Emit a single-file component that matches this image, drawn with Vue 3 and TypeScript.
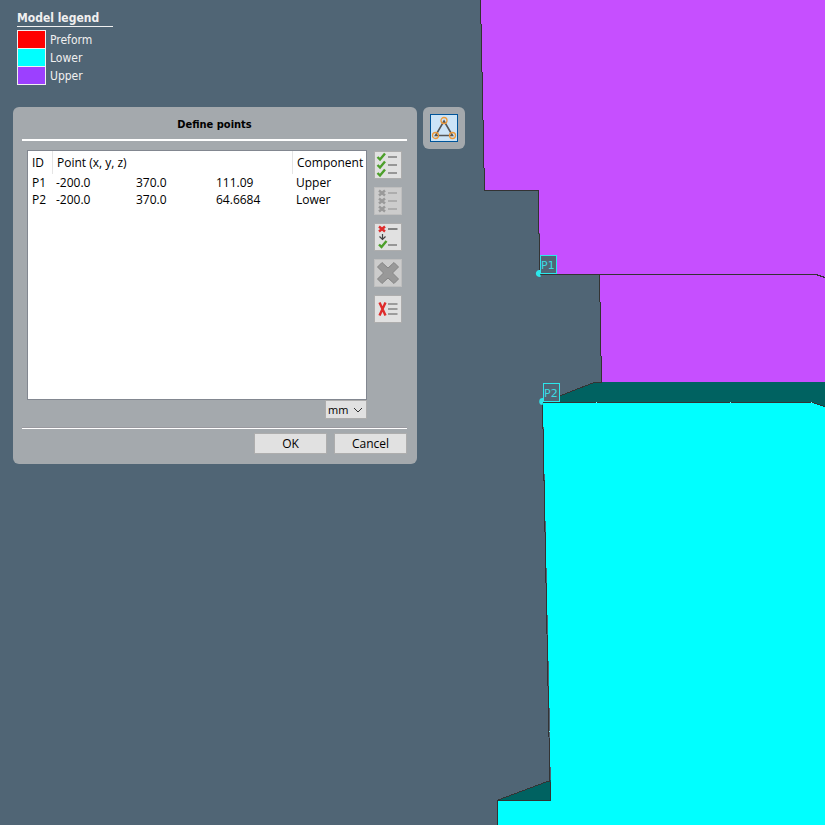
<script setup lang="ts">
import { ref } from 'vue'

interface LegendItem {
  name: string
  tone: string
}

interface PointRow {
  id: string
  x: string
  y: string
  z: string
  component: string
}

const legend: LegendItem[] = [
  { name: 'Preform', tone: 'preform' },
  { name: 'Lower', tone: 'lower' },
  { name: 'Upper', tone: 'upper' },
]

const points = ref<PointRow[]>([
  { id: 'P1', x: '-200.0', y: '370.0', z: '111.09', component: 'Upper' },
  { id: 'P2', x: '-200.0', y: '370.0', z: '64.6684', component: 'Lower' },
])

const unit = ref('mm')
const rowOffsets: number[] = [5, 13, 21]
</script>

<template>
  <main class="viewport">
    <svg class="scene" viewBox="0 0 825 825" preserveAspectRatio="xMinYMin slice" aria-hidden="true">
      <g shape-rendering="crispEdges">
        <path class="upper" d="M480 0L484 190H539L540 274H600L602 383H825V0Z" />
        <path class="shade" d="M543 402L596 382H825V406L812 403Z" />
        <path class="lower" d="M543 403H812L825 407V825H498V800H551L550 731Z" />
        <path class="shade" d="M498 800L551 780V800Z" />
        <path class="edge" d="M480.500 0L484.500 190.500H538.500L539.500 274.500H816L825 277.500" />
        <path class="edge" d="M599.500 274L601.500 382" />
        <path class="edge" d="M543 402.500L594 382.500H602" />
        <path class="edge" d="M825 406.500L812 402.500H542.500L549.500 762L550.500 800.500H497.500V825" />
        <path class="edge" d="M498 800L550 780.500" />
        <path class="glint" d="M596 402h1v1h-1zM730 402h1v1h-1zM811 402h1v1h-1zM549 731h1v1h-1z" />
      </g>
      <path class="marker" d="M540 270A3.500 3.500 0 1 0 541 276.500L540 274Z" />
      <path class="marker" d="M543 398A3.500 3.500 0 1 0 542.500 405L543 403Z" />
      <rect class="tag solid" x="540.500" y="255.500" width="16" height="18" />
      <text class="tag-text" x="541" y="269">P1</text>
      <rect class="tag solid" x="543.500" y="383.500" width="16" height="18" />
      <text class="tag-text" x="544" y="397">P2</text>
    </svg>

    <section class="legend">
      <h1>Model legend</h1>
      <ul>
        <li v-for="item in legend" :key="item.name">
          <span class="swatch" :class="item.tone"></span>
          <span>{{ item.name }}</span>
        </li>
      </ul>
    </section>

    <div class="tools">
      <form class="dialog" @submit.prevent>
        <h2>Define points</h2>
        <div class="body">
          <div class="list">
            <div class="table-box">
              <table>
                <colgroup>
                  <col class="c-id" /><col class="c-num" /><col class="c-num" /><col class="c-num" /><col />
                </colgroup>
                <thead>
                  <tr>
                    <th>ID</th>
                    <th colspan="3">Point (x, y, z)</th>
                    <th>Component</th>
                  </tr>
                </thead>
                <tbody>
                  <tr v-for="p in points" :key="p.id">
                    <td>{{ p.id }}</td>
                    <td>{{ p.x }}</td>
                    <td>{{ p.y }}</td>
                    <td>{{ p.z }}</td>
                    <td>{{ p.component }}</td>
                  </tr>
                </tbody>
              </table>
            </div>
            <div class="unit">
              <select v-model="unit" aria-label="Unit">
                <option>mm</option>
              </select>
              <svg viewBox="0 0 10 6" aria-hidden="true"><path d="M1 1L5 5L9 1" /></svg>
            </div>
          </div>

          <div class="actions">
            <button type="button" aria-label="Select all">
              <svg viewBox="0 0 26 26">
                <g v-for="y in rowOffsets" :key="y">
                  <path class="check" :d="`M2.500 ${y}L5 ${y + 2.5}L10 ${y - 3.5}`" />
                  <path class="line" :d="`M13 ${y}H22`" />
                </g>
              </svg>
            </button>
            <button type="button" disabled aria-label="Deselect all">
              <svg viewBox="0 0 26 26">
                <g v-for="y in rowOffsets" :key="y">
                  <path class="cross" :d="`M4 ${y - 2.5}L10 ${y + 2.5}M10 ${y - 2.5}L4 ${y + 2.5}`" />
                  <path class="line" :d="`M13 ${y}H22`" />
                </g>
              </svg>
            </button>
            <button type="button" aria-label="Invert selection">
              <svg viewBox="0 0 26 26">
                <path class="cross" d="M4 2.500L10 7.500M10 2.500L4 7.500" />
                <path class="line dark" d="M13 5H22.500" />
                <path class="arrow" d="M7.500 10V15.500M4.500 12.500L7.500 15.500L10.500 12.500" />
                <path class="check" d="M4 20.500L6.500 23L11.500 17" />
                <path class="line" d="M13 21H22" />
              </svg>
            </button>
            <button type="button" disabled aria-label="Delete point">
              <svg viewBox="0 0 26 26">
                <path class="big" d="M7 2.500L13 8L19 2.500L23.500 7L17.500 13L23.500 19L19 23.500L13 18L7 23.500L2.500 19L8.500 13L2.500 7Z" />
              </svg>
            </button>
            <button type="button" aria-label="Delete all points">
              <svg viewBox="0 0 26 26">
                <path class="cross" d="M4.500 6.500L10.500 19.500M10.500 6.500L4.500 19.500" />
                <path class="line" d="M13 8H22.500M13 13H22.500M13 18H22.500" />
              </svg>
            </button>
          </div>
        </div>
        <footer>
          <button type="submit">OK</button>
          <button type="button">Cancel</button>
        </footer>
      </form>

      <div class="toolbar">
        <button type="button" aria-label="Define points" aria-pressed="true">
          <svg viewBox="0 0 26 26">
            <path class="triangle" d="M13 6L21.500 20.500H4.500Z" />
            <circle cx="13" cy="5.500" r="3" />
            <circle cx="4.500" cy="20.500" r="3" />
            <circle cx="21.500" cy="20.500" r="3" />
          </svg>
        </button>
      </div>
    </div>
  </main>
</template>

<style>
body {
  background: #506575;
}
</style>

<style scoped>
.viewport {
  position: relative;
  box-sizing: border-box;
  min-height: 100vh;
  padding: 11px 13px;
  overflow: hidden;
  font: 12px/17px "Open Sans", "Noto Sans", sans-serif;
  color: #000;
}
.scene {
  position: absolute;
  inset: 0;
  width: 100%;
  height: 100%;
}
.upper { fill: #c64fff; }
.lower { fill: #00ffff; }
.shade { fill: #006261; }
.edge { fill: none; stroke: #333; }
.glint { fill: #7ff; }
.marker { fill: #2ce6ea; }
.tag { fill: none; stroke: #3bdce2; }
.tag.solid { fill: #506575; stroke: #2ce6ea; }
.tag-text {
  font: 11px "DejaVu Sans", sans-serif;
  fill: #3bdce2;
}
.legend {
  position: relative;
  width: 96px;
  margin-left: 4px;
  color: #f0f0f0;
}
.legend h1 {
  margin: 0 0 3px;
  border-bottom: 1px solid #f0f0f0;
  font: bold 12px/15px "DejaVu Sans Condensed", "DejaVu Sans", sans-serif;
  white-space: nowrap;
}
.legend ul {
  margin: 0;
  padding: 0;
  list-style: none;
}
.legend li {
  display: flex;
  gap: 4px;
  height: 18px;
  font: 12px/20px "DejaVu Sans Condensed", "DejaVu Sans", sans-serif;
}
.swatch {
  box-sizing: border-box;
  width: 29px;
  height: 19px;
  flex: none;
  border: 1px solid #f0f0f0;
}
.swatch.preform { background: #f00; }
.swatch.lower { background: #0ff; }
.swatch.upper { background: #9c40ff; }
.tools {
  position: relative;
  display: flex;
  align-items: flex-start;
  gap: 6px;
  margin-top: 23px;
}
.dialog {
  box-sizing: border-box;
  width: 404px;
  padding: 0 10px 10px 9px;
  border-radius: 6px;
  background: #a4a9ad;
}
h2 {
  margin: 0;
  padding: 9px 0 5px;
  border-bottom: 2px solid #fff;
  font: bold 11px/18px "DejaVu Sans Condensed", "DejaVu Sans", sans-serif;
  text-align: center;
}
.body {
  display: flex;
  gap: 7px;
  padding: 9px 5px 9px;
}
.list {
  flex: 1;
}
.table-box {
  box-sizing: border-box;
  height: 250px;
  border: 1px solid #828790;
  background: #fff;
}
table {
  width: 100%;
  table-layout: fixed;
  border-collapse: separate;
  border-spacing: 0;
}
.c-id { width: 24px; }
.c-num { width: 80px; }
th, td {
  height: 17px;
  padding: 0 0 0 4px;
  text-align: left;
  font-weight: normal;
  white-space: nowrap;
}
th { height: 23px; }
th + th { border-left: 1px solid #e5e5e5; }
.unit {
  position: relative;
  width: 42px;
  height: 19px;
  margin: 0 0 0 auto;
}
.unit select {
  box-sizing: border-box;
  display: block;
  width: 100%;
  height: 100%;
  padding: 0 2px;
  appearance: none;
  border: 1px solid #adadad;
  border-radius: 0;
  background: #e1e1e1;
  color: #000;
  font: 11px/17px "Open Sans", sans-serif;
}
.unit svg {
  position: absolute;
  top: 7px;
  right: 4px;
  width: 10px;
  height: 6px;
  fill: none;
  stroke: #333;
  pointer-events: none;
}
.actions {
  display: flex;
  flex-direction: column;
  gap: 8px;
  padding-top: 1px;
}
button {
  box-sizing: border-box;
  padding: 0;
  border: 1px solid #adadad;
  border-radius: 0;
  background: #e1e1e1;
  color: #000;
  font: inherit;
}
.actions button {
  width: 28px;
  height: 28px;
}
.actions button:disabled {
  border-color: #bfbfbf;
  background: #ccc;
}
button svg {
  display: block;
  width: 26px;
  height: 26px;
  fill: none;
}
.check { stroke: #4c9f2a; stroke-width: 2.4; }
.cross { stroke: #de2b2b; stroke-width: 2.4; }
.line { stroke: #858585; stroke-width: 1.6; }
.line.dark { stroke: #444; stroke-width: 1.2; }
.arrow { stroke: #444; stroke-width: 1.2; }
button:disabled .cross { stroke: #999; }
button:disabled .line { stroke: #a6a6a6; }
.big { fill: #999; stroke: #858585; }
footer {
  display: flex;
  justify-content: flex-end;
  gap: 7px;
  padding-top: 4px;
  border-top: 1px solid #fff;
  box-shadow: 0 -1px #9a9aa0;
}
footer button {
  width: 73px;
  height: 21px;
  line-height: 19px;
}
.toolbar {
  padding: 7px;
  border-radius: 6px;
  background: #a4a9ad;
}
.toolbar button {
  display: block;
  width: 28px;
  height: 28px;
  border-color: #005499;
  background: #cce4f7;
}
.triangle { stroke: #555; stroke-width: 1.6; }
circle { stroke: #ee9a3a; stroke-width: 1.3; }
</style>
